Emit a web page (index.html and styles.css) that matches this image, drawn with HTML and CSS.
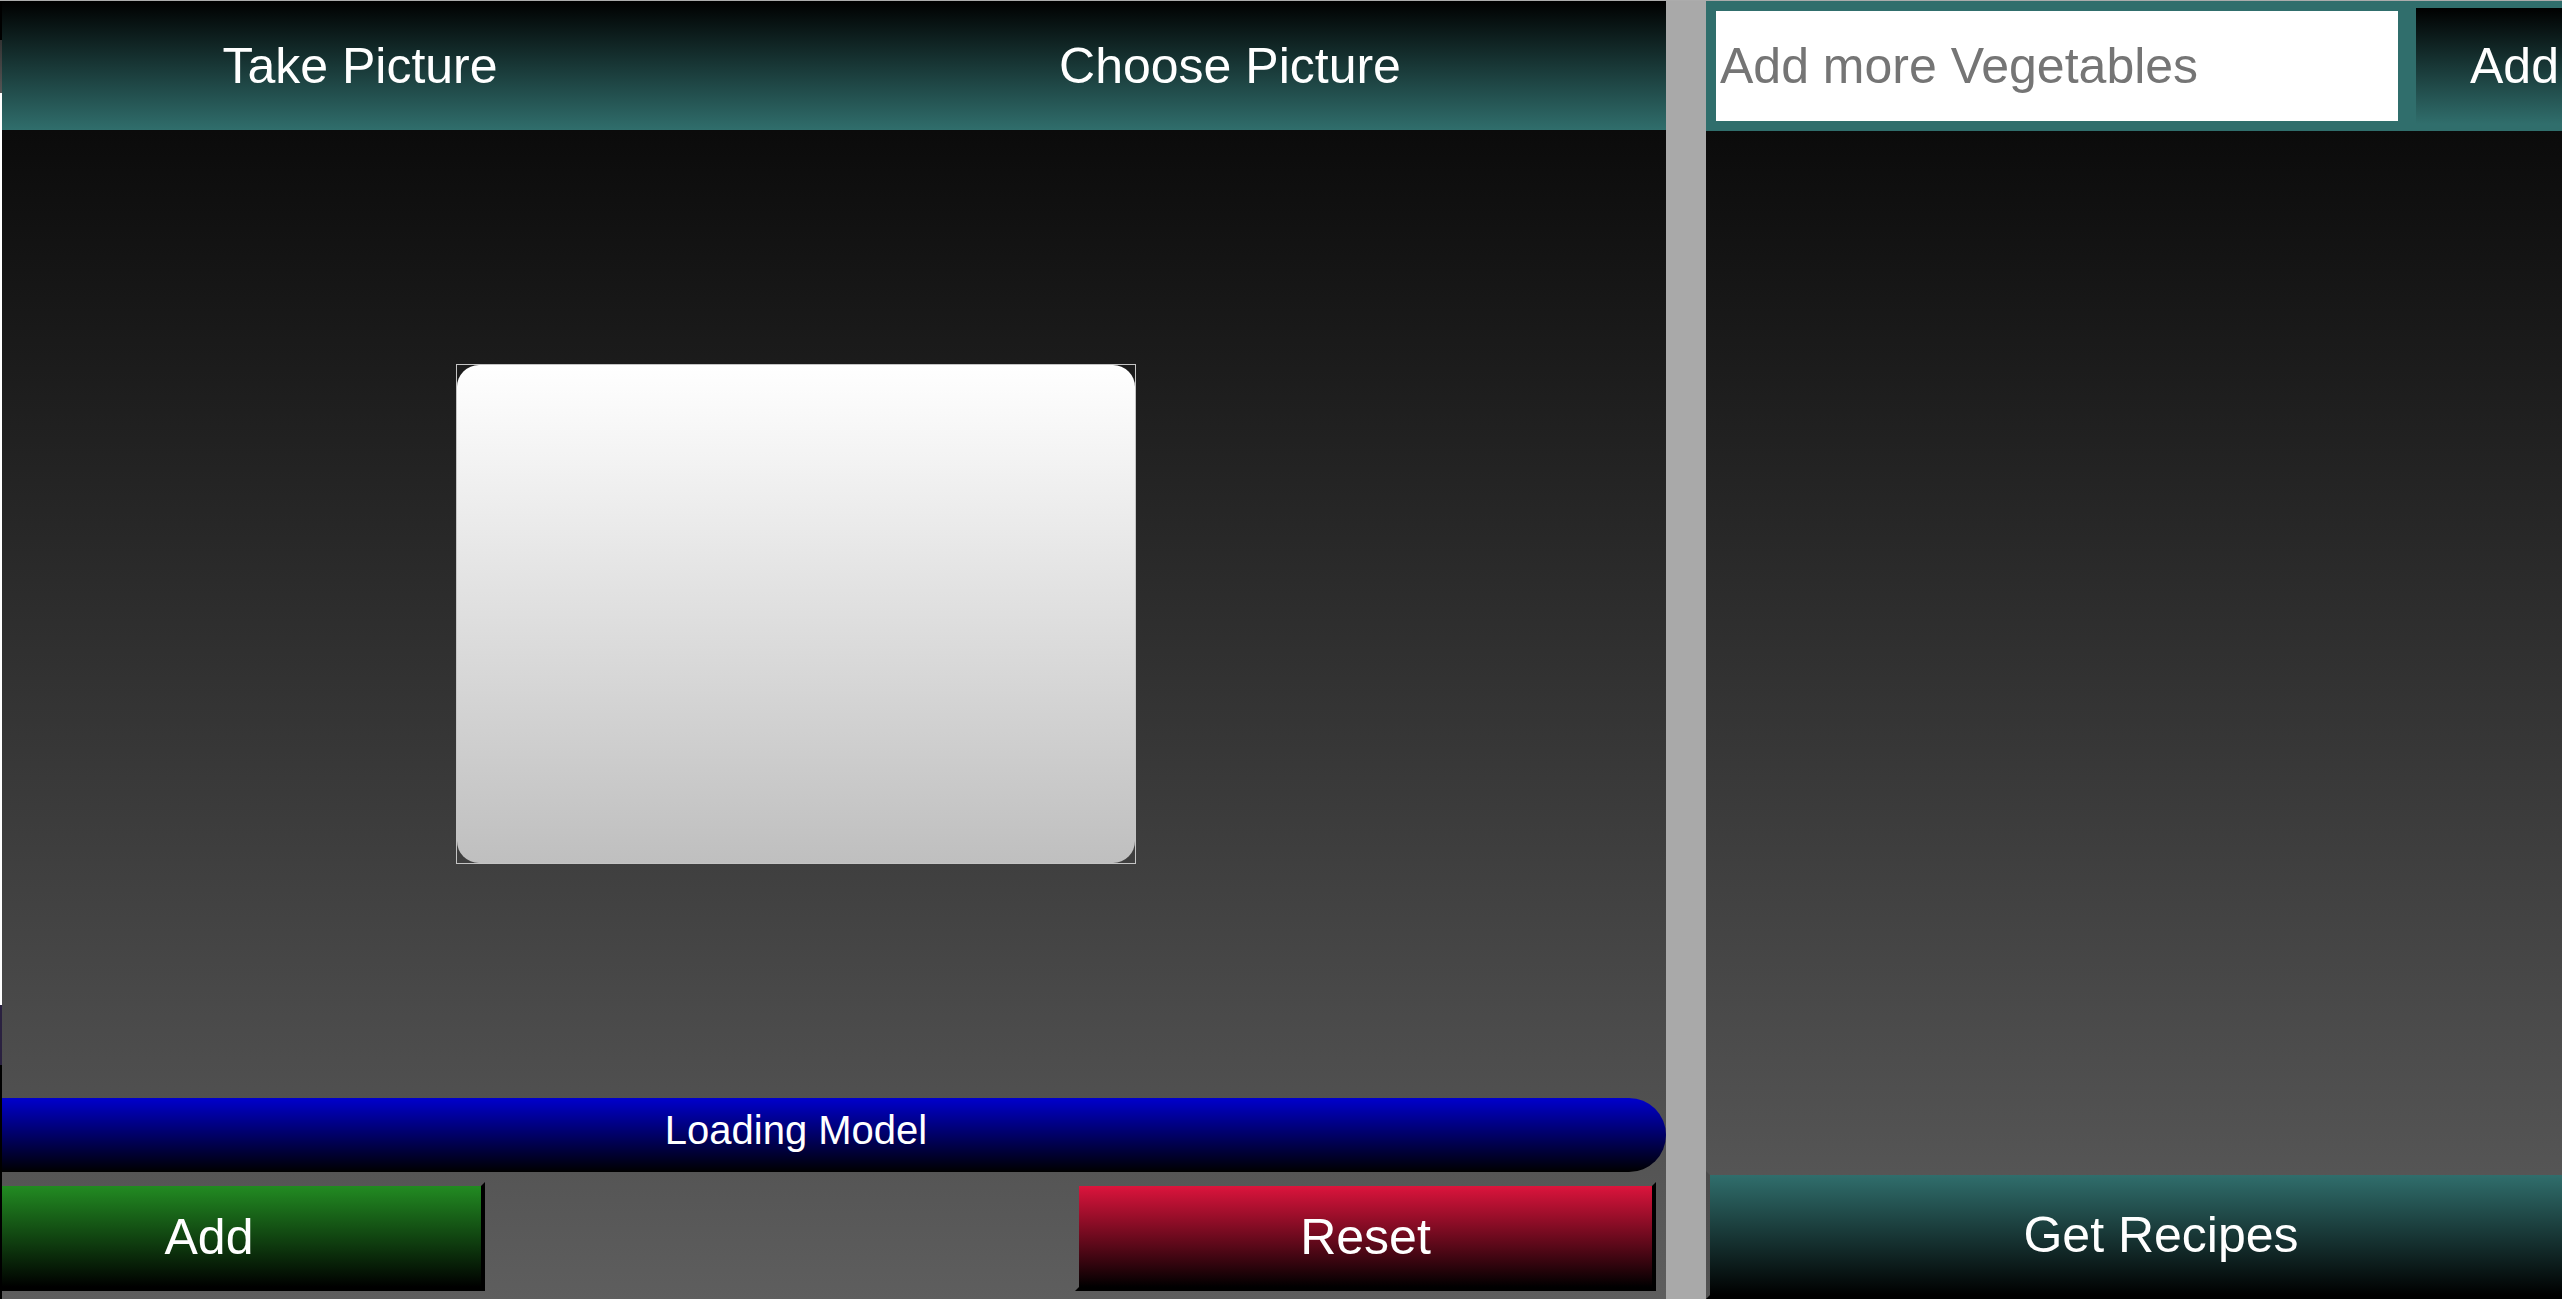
FILE: index.html
```html
<!DOCTYPE html>
<html lang="en">
<head>
<meta charset="utf-8">
<title>Vegetable Recipes</title>
<link rel="stylesheet" href="styles.css">
</head>
<body>
<div class="app">
  <div class="edge">
    <i class="edge-a"></i><i class="edge-b"></i><i class="edge-c"></i><i class="edge-d"></i><i class="edge-e"></i>
  </div>
  <section class="camera">
    <header class="cam-head">
      <button class="head-btn">Take Picture</button>
      <button class="head-btn">Choose Picture</button>
    </header>
    <div class="stage">
      <div class="frame"><div class="preview"></div></div>
    </div>
    <div class="loading">Loading Model</div>
    <div class="actions">
      <button class="btn btn-add">Add</button>
      <button class="btn btn-reset">Reset</button>
    </div>
  </section>
  <div class="divider"></div>
  <section class="veg">
    <header class="veg-head">
      <input class="veg-input" type="text" placeholder="Add more Vegetables">
      <button class="veg-add">Add</button>
    </header>
    <div class="veg-list"></div>
    <button class="btn btn-recipes">Get Recipes</button>
  </section>
</div>
</body>
</html>
```
FILE: styles.css
```css
* { box-sizing: border-box; }
html, body { margin: 0; padding: 0; }
body {
  width: 2562px;
  height: 1299px;
  overflow: hidden;
  border-top: 1px solid #acacac;
  background: linear-gradient(to bottom, #0b0b0b 130px, #5e5e5e 1299px);
  font-family: "Liberation Sans", Arial, sans-serif;
  color: #fff;
}
button {
  font-family: inherit;
  color: #fff;
  margin: 0;
  padding: 0;
  cursor: pointer;
}
.app {
  display: flex;
  height: 1298px;
}
.edge {
  flex: 0 0 2px;
  display: flex;
  flex-direction: column;
}
.edge i { display: block; }
.edge-a { height: 39px; background: #000; }
.edge-b { height: 53px; background: linear-gradient(#333, #555); }
.edge-c { height: 912px; background: #fff; }
.edge-d { height: 60px; background: #2a2140; }
.edge-e { flex: 1; background: #000; }

.camera {
  flex: 0 0 1664px;
  display: flex;
  flex-direction: column;
  padding-bottom: 8px;
  overflow: hidden;
}
.cam-head {
  height: 129px;
  flex: 0 0 129px;
  display: grid;
  grid-template-columns: 716px 1024px;
  background: linear-gradient(to bottom, #000, #306e6c);
  overflow: hidden;
}
.head-btn {
  background: transparent;
  border: 0;
  font-size: 50px;
  text-align: center;
}
.stage {
  flex: 1;
  display: flex;
  align-items: center;
  justify-content: center;
  padding-right: 76px;
}
.frame {
  width: 680px;
  height: 500px;
  border: 1px solid #c4c4c4;
}
.preview {
  width: 100%;
  height: 100%;
  border-radius: 22px;
  background: linear-gradient(to bottom, #ffffff, #bfbfbf);
}
.loading {
  flex: 0 0 74px;
  height: 74px;
  line-height: 64px;
  padding-bottom: 10px;
  padding-right: 76px;
  text-align: center;
  font-size: 40px;
  border-radius: 0 37px 37px 0;
  background: linear-gradient(to bottom, #0000cd, #000);
}
.actions {
  flex: 0 0 109px;
  margin-top: 10px;
  display: flex;
  justify-content: space-between;
}
.btn {
  font-size: 50px;
  border: 4px solid #000;
  border-top-color: transparent;
  border-left-color: transparent;
  background-clip: padding-box;
  text-align: center;
}
.btn-add {
  width: 483px;
  border-left-width: 0;
  padding-right: 65px;
  background-image: linear-gradient(to bottom, #228b22, #000);
}
.btn-reset {
  width: 581px;
  margin-right: 10px;
  background-image: linear-gradient(to bottom, #dc143c, #000);
}
.divider {
  flex: 0 0 40px;
  background: #a9a9a9;
}
.veg {
  flex: 0 0 856px;
  display: flex;
  flex-direction: column;
  overflow: hidden;
}
.veg-head {
  flex: 0 0 130px;
  height: 130px;
  padding: 10px;
  display: flex;
  align-items: center;
  gap: 18px;
  background: #306e6c;
}
.veg-input {
  flex: 0 0 682px;
  height: 110px;
  border: 0;
  padding: 0 0 0 4px;
  margin: 0;
  font-family: inherit;
  font-size: 50px;
  color: #333;
  background: #fff;
  outline: none;
}
.veg-input::placeholder { color: #757575; }
.veg-add {
  flex: 0 0 197px;
  height: 116px;
  border: 0;
  font-size: 50px;
  background: linear-gradient(to bottom, #000, #306e6c);
}
.veg-list { flex: 1; }
.btn-recipes {
  flex: 0 0 128px;
  height: 128px;
  width: 910px;
  align-self: flex-start;
  border-left-color: rgba(0, 0, 0, 0.12);
  background-image: linear-gradient(to bottom, #306e6c, #000);
}
```
